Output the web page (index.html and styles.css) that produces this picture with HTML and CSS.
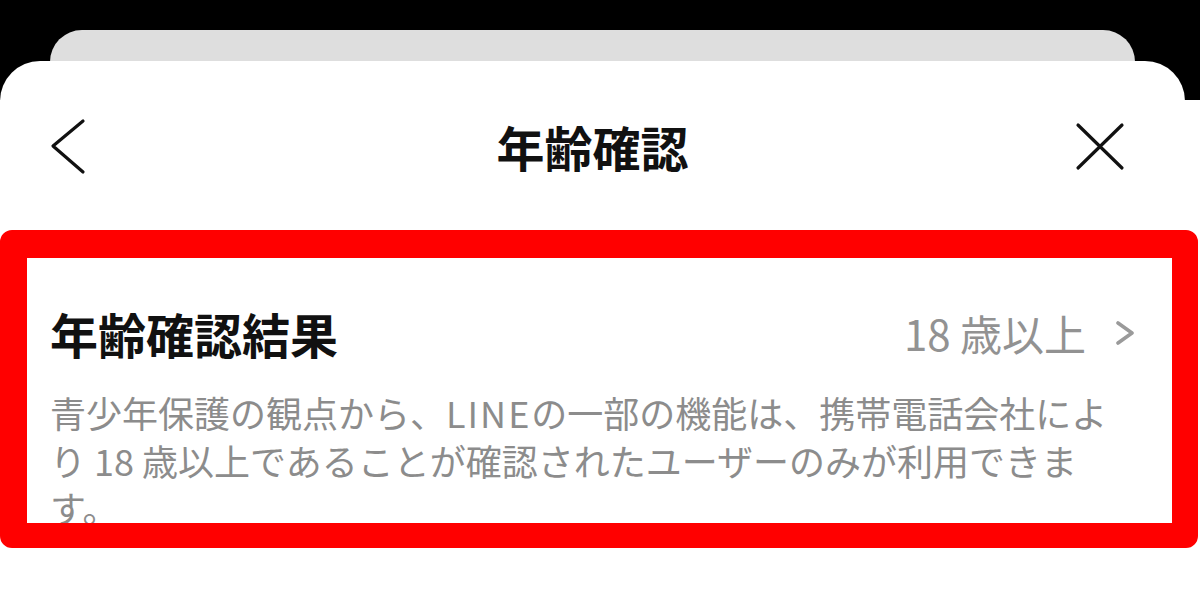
FILE: index.html
```html
<!DOCTYPE html>
<html lang="ja">
<head>
<meta charset="utf-8">
<title>年齢確認</title>
<link rel="stylesheet" href="styles.css">
</head>
<body>
<div class="backdrop">
  <div class="backcard"></div>
</div>
<div class="sheet">
  <header class="nav">
    <svg class="nav-back" viewBox="0 0 40 60" aria-hidden="true">
      <path d="M35 5 L5 30 L35 56" />
    </svg>
    <h1 class="nav-title">年齢確認</h1>
    <svg class="nav-close" viewBox="0 0 50 50" aria-hidden="true">
      <path d="M3 4 L47 47 M47 4 L3 47" />
    </svg>
  </header>
  <section class="highlight">
    <div class="row">
      <h2 class="row-title">年齢確認結果</h2>
      <div class="row-value">
        <span>18 歳以上</span>
        <svg class="row-chevron" viewBox="0 0 20 24" aria-hidden="true">
          <path d="M3 2 L17 12 L3 22" />
        </svg>
      </div>
    </div>
    <p class="desc">青少年保護の観点から、<span class="latin">LINE</span>の一部の機能は、携帯電話会社によ<br>り 18 歳以上であることが確認されたユーザーのみが利用できま<br>す。</p>
  </section>
</div>
</body>
</html>
```
FILE: styles.css
```css
html, body {
  margin: 0;
  padding: 0;
}
body {
  background: #fff;
  font-family: "Noto Sans CJK JP", "Noto Sans", sans-serif;
  width: 1200px;
  height: 608px;
  overflow: hidden;
}
.backdrop {
  background: #000;
  height: 100px;
  padding-top: 30px;
  box-sizing: border-box;
}
.backcard {
  margin-left: 50px;
  width: 1085px;
  height: 70px;
  background: #dedede;
  border-radius: 32px 32px 0 0;
}
.sheet {
  margin-top: -39px;
  width: 1185px;
  background: #fff;
  border-radius: 40px 40px 0 0;
  position: relative;
}
.nav {
  height: 169px;
  display: grid;
  grid-template-columns: 1fr auto 1fr;
  align-items: center;
}
.nav-back {
  width: 40px;
  height: 60px;
  margin-left: 48px;
  fill: none;
  stroke: #111;
  stroke-width: 3.2;
  stroke-linecap: round;
  stroke-linejoin: round;
}
.nav-title {
  margin: 0;
  font-size: 48px;
  font-weight: 700;
  line-height: 60px;
  color: #111;
}
.nav-close {
  justify-self: end;
  width: 50px;
  height: 50px;
  margin-right: 60px;
  fill: none;
  stroke: #111;
  stroke-width: 3.2;
  stroke-linecap: round;
}
.highlight {
  width: 1198px;
  height: 318px;
  box-sizing: border-box;
  border-style: solid;
  border-color: #ff0000;
  border-width: 28px 26px 25px 27px;
  border-radius: 12px;
  overflow: hidden;
  background: #fff;
}
.row {
  display: flex;
  align-items: center;
  justify-content: space-between;
  padding: 46px 37px 0 23px;
}
.row-title {
  margin: 0;
  font-size: 48px;
  font-weight: 700;
  line-height: 58px;
  color: #111;
}
.row-value {
  display: flex;
  align-items: center;
  gap: 29px;
  font-size: 42px;
  line-height: 58px;
  color: #929292;
}
.row-chevron {
  width: 20px;
  height: 24px;
  fill: none;
  stroke: #9a9a9a;
  stroke-width: 3.6;
  stroke-linecap: round;
  stroke-linejoin: round;
}
.desc {
  margin: 27px 0 0;
  padding-left: 23px;
  font-size: 36px;
  line-height: 47.5px;
  color: #8c8c8c;
  white-space: nowrap;
}
.latin {
  letter-spacing: 2px;
}
```
